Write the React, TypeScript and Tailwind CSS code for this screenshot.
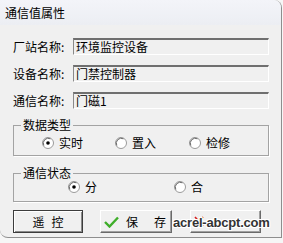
const font = { fontFamily: '"Noto Sans CJK SC", "Liberation Sans", sans-serif' };

function Radio({ checked }: { checked?: boolean }) {
  return (
    <svg width="12" height="12" viewBox="0 0 12 12" className="shrink-0">
      <circle cx="6" cy="6" r="5.5" fill="#ffffff" stroke="#9a9a9a" />
      <path d="M1.8 8.5 A5 5 0 0 1 8.5 1.8" fill="none" stroke="#6a6a6a" />
      {checked && <circle cx="6" cy="6" r="1.8" fill="#000000" />}
    </svg>
  );
}

function Field({ label, value }: { label: string; value: string }) {
  return (
    <div className="flex items-center h-[17px]">
      <div className="w-[60px] text-[12px] leading-[17px]">{label}</div>
      <div className="w-[196px] h-[17px] border-t-2 border-l border-t-[#6f6f6f] border-l-[#8a8a8a] border-r border-b border-r-white border-b-white bg-[#f0f0f0] pl-[2px] text-[12px] leading-[14px]">
        {value}
      </div>
    </div>
  );
}

export default function App() {
  return (
    <div className="relative w-[283px] h-[243px] bg-[#f6f6f6] overflow-hidden text-black" style={font}>
      <div className="w-[282px] h-[238px] bg-[#f0f0f0] border-r border-b border-[#8e8e8e] rounded-tr-[8px] rounded-bl-[8px] overflow-hidden flex flex-col">
        <div className="h-[25px] shrink-0 bg-gradient-to-b from-[#f3f4f9] to-[#eceef3] flex items-center px-[5px] text-[12px]">
          通信值属性
        </div>
        <div className="pl-[13px] pt-[13px] flex flex-col">
          <div className="flex flex-col gap-[10px]">
            <Field label="厂站名称:" value="环境监控设备" />
            <Field label="设备名称:" value="门禁控制器" />
            <Field label="通信名称:" value="门磁1" />
          </div>

          <fieldset className="mt-[9px] w-[256px] border border-[#a3a3a3] shadow-[1px_1px_0_#ffffff]">
            <legend className="ml-[7px] px-[2px] text-[12px] leading-[14px]">数据类型</legend>
            <div className="flex items-center h-[14px] mt-[4px] mb-[5px] pl-[28px] text-[12px]">
              <div className="w-[73px] flex items-center gap-[5px]">
                <Radio checked />
                <span>实时</span>
              </div>
              <div className="w-[74px] flex items-center gap-[5px]">
                <Radio />
                <span>置入</span>
              </div>
              <div className="flex items-center gap-[5px]">
                <Radio />
                <span>检修</span>
              </div>
            </div>
          </fieldset>

          <fieldset className="mt-[10px] w-[256px] border border-[#a3a3a3] shadow-[1px_1px_0_#ffffff]">
            <legend className="ml-[7px] px-[2px] text-[12px] leading-[14px]">通信状态</legend>
            <div className="flex items-center h-[14px] mb-[7px] pl-[54px] text-[12px]">
              <div className="w-[106px] flex items-center gap-[5px]">
                <Radio checked />
                <span>分</span>
              </div>
              <div className="flex items-center gap-[5px]">
                <Radio />
                <span>合</span>
              </div>
            </div>
          </fieldset>

          <div className="mt-[8px] flex items-center text-[12px]">
            <button className="w-[70px] h-[23px] border border-[#3c3c3c] bg-[#f0f0f0] shadow-[inset_1px_1px_0_#ffffff,inset_-1px_-1px_0_#8a8a8a] flex items-center justify-center gap-[7px]">
              <span>遥</span>
              <span>控</span>
            </button>
            <button className="ml-[17px] w-[72px] h-[23px] border-t border-l border-t-white border-l-white border-r border-b border-r-[#6a6a6a] border-b-[#6a6a6a] bg-[#f0f0f0] shadow-[inset_-1px_-1px_0_#a0a0a0] flex items-center pl-[3px]">
              <svg width="15" height="12" viewBox="0 0 15 12">
                <path d="M1 6 L5.5 10.5 L14 1.5" fill="none" stroke="#3fae2a" strokeWidth="2.4" />
              </svg>
              <span className="ml-[7px]">保</span>
              <span className="ml-[16px]">存</span>
            </button>
            {/* exit button: its caption is hidden under the watermark */}
            <button className="ml-[18px] w-[71px] h-[23px] border-t border-l border-t-white border-l-white border-r border-b border-r-[#6a6a6a] border-b-[#6a6a6a] bg-[#f0f0f0] shadow-[inset_-1px_-1px_0_#a0a0a0] flex items-center pl-[3px]">
              <svg width="10" height="11" viewBox="0 0 10 11">
                <path d="M1 1 L9 10 M9 1 L1 10" fill="none" stroke="#d62020" strokeWidth="1.6" />
              </svg>
            </button>
          </div>
        </div>
      </div>

      <div
        className="absolute left-[173px] top-[214px] text-[13px] font-bold text-[#333333] leading-[18px] tracking-[-0.2px] [text-shadow:1px_0_0_#fff,-1px_0_0_#fff,0_1px_0_#fff,0_-1px_0_#fff,1px_1px_0_#fff,-1px_-1px_0_#fff,1px_-1px_0_#fff,-1px_1px_0_#fff]"
        style={{ fontFamily: '"Liberation Sans", sans-serif' }}
      >
        acrel-abcpt.com
      </div>
    </div>
  );
}
